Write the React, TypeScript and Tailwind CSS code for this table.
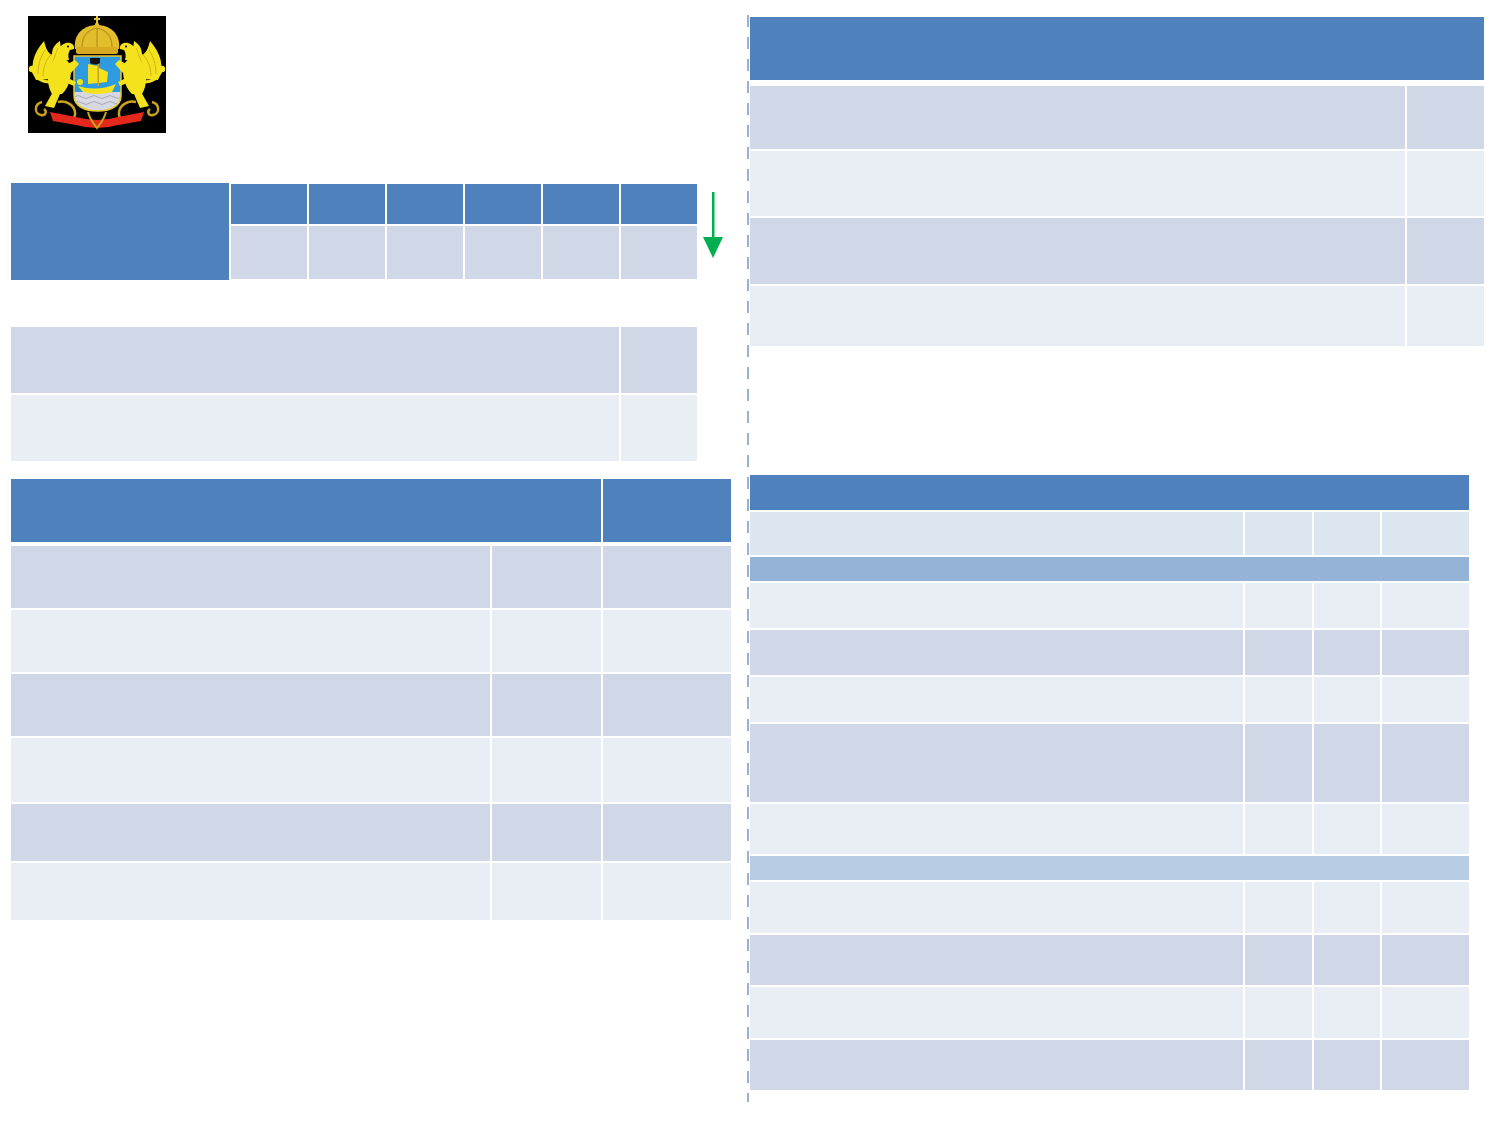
const HEAD = "bg-[#4f81bd]";
const DARK = "bg-[#d0d8e8]";
const LIGHT = "bg-[#e9edf4]";

function Griffin() {
  return (
    <g fill="#f4e21c">
      <path d="M8 64 C1 52 5 37 16 25 C18 33 20 37 24 39 C24 32 27 28 32 25 C34 37 31 52 24 63 Z" />
      <path d="M10 58 C10 48 13 40 17 34 M15 60 C15 50 19 42 24 38 M21 60 C23 50 26 42 30 32" stroke="#c9a21c" strokeWidth="0.8" fill="none" />
      <path d="M28 44 C27 36 31 29 38 27 C43 26 47 29 46 33 L42 34 C40 37 40 40 41 44 Z" />
      <circle cx="40" cy="30.5" r="1" fill="#000" />
      <path d="M27 42 C34 40 43 44 43 54 C43 64 40 72 34 78 L24 78 C19 70 19 58 22 50 Z" />
      <path d="M38 49 L47 44 L51 48 L43 57 Z" />
      <path d="M40 62 L48 66 L46 70 L39 67 Z" />
      <path d="M26 74 L17 90 L26 92 L32 78 Z" />
      <path d="M22 66 C14 66 8 62 5 55" stroke="#f4e21c" strokeWidth="3" fill="none" />
      <circle cx="4" cy="53" r="3.2" />
      <path d="M14 86 C6 88 6 98 13 99 C18 100 19 95 16 93" stroke="#c9a21c" strokeWidth="2.5" fill="none" />
      <path d="M30 86 C38 84 46 89 47 96 C48 103 41 106 37 102" stroke="#c9a21c" strokeWidth="2.5" fill="none" />
      <path d="M22 96 L48 101 L48 109 L25 105 Z" fill="#e4281c" />
    </g>
  );
}

function CoatOfArms() {
  return (
    <svg width="138" height="117" viewBox="0 0 138 117">
      <rect width="138" height="117" fill="#000" />
      <defs>
        <clipPath id="shield">
          <path d="M46 40 H93 V80 C93 90 82 95 69.5 95 C57 95 46 90 46 80 Z" />
        </clipPath>
      </defs>
      {/* crown */}
      <rect x="68" y="0" width="2" height="8" fill="#e8c830" />
      <rect x="66" y="2" width="6" height="2" fill="#e8c830" />
      <circle cx="69" cy="9" r="2.2" fill="#e8c830" />
      <path d="M47 33 C45 17 57 9 69 9 C81 9 93 17 91 33 Z" fill="#e2bd2c" />
      <path d="M54 31 C54 20 60 14 69 12 M84 31 C84 20 78 14 69 12 M69 12 V31" stroke="#b8901c" strokeWidth="1.2" fill="none" />
      <rect x="48" y="31" width="42" height="7" rx="2" fill="#d8aa22" />
      {/* shield */}
      <g clipPath="url(#shield)">
        <rect x="46" y="38" width="48" height="60" fill="#2e9be0" />
        <rect x="46" y="76" width="48" height="22" fill="#d6d8e2" />
        <path d="M46 81 Q50 78 54 81 T62 81 T70 81 T78 81 T86 81 T94 81 M46 87 Q50 84 54 87 T62 87 T70 87 T78 87 T86 87 T94 87" stroke="#a8acb8" strokeWidth="1" fill="none" />
        <path d="M60 48 L70 50 L70 67 L60 68 Z" fill="#f4e21c" />
        <path d="M71 52 L80 56 L79 66 L71 67 Z" fill="#f4e21c" />
        <rect x="69.5" y="44" width="1.5" height="26" fill="#c9a21c" />
        <path d="M50 70 Q69 76 88 68 L84 76 Q69 80 55 76 Z" fill="#f4e21c" />
        <circle cx="52" cy="66" r="3" fill="#f4e21c" />
        <path d="M62 42 H72 V47 Q67 50 62 47 Z" fill="#111" />
      </g>
      <path d="M46 40 H93 V80 C93 90 82 95 69.5 95 C57 95 46 90 46 80 Z" fill="none" stroke="#e8c830" strokeWidth="1.5" />
      <Griffin />
      <g transform="translate(138,0) scale(-1,1)">
        <Griffin />
      </g>
      <path d="M48 101 Q69 107 90 101 L90 109 Q69 115 48 109 Z" fill="#e4281c" />
      <path d="M60 96 C62 104 66 108 69 112 C72 108 76 104 78 96" stroke="#c9a21c" strokeWidth="2" fill="none" />
    </svg>
  );
}

function DownArrow() {
  return (
    <svg width="20" height="66" viewBox="0 0 20 66">
      <rect x="9" y="0" width="2.5" height="48" fill="#00b050" />
      <polygon points="0,45 20,45 10,66" fill="#00b050" />
    </svg>
  );
}

const t3Rows = [62, 62, 62, 64, 57, 57];
const t4Rows = [63, 65, 66, 60];

type Row = { h: number; kind: "dark" | "light" | "first" | "sec1" | "sec2" };
const t5Rows: Row[] = [
  { h: 43, kind: "first" },
  { h: 24, kind: "sec1" },
  { h: 45, kind: "light" },
  { h: 45, kind: "dark" },
  { h: 45, kind: "light" },
  { h: 78, kind: "dark" },
  { h: 50, kind: "light" },
  { h: 24, kind: "sec2" },
  { h: 51, kind: "light" },
  { h: 50, kind: "dark" },
  { h: 51, kind: "light" },
  { h: 50, kind: "dark" },
];

function rowBg(kind: Row["kind"]) {
  if (kind === "dark") return "bg-[#d0d8e8]";
  if (kind === "light") return "bg-[#e9edf4]";
  if (kind === "first") return "bg-[#dce6f1]";
  if (kind === "sec1") return "bg-[#95b3d7]";
  return "bg-[#b8cce4]";
}

export default function App() {
  return (
    <div className="w-[1500px] h-[1125px] bg-white flex font-['Liberation_Sans',sans-serif]">
      {/* Left column */}
      <div className="w-[747px] pl-[11px] pt-[16px] flex flex-col">
        <div className="ml-[17px]">
          <CoatOfArms />
        </div>

        {/* Table 1 */}
        <div className="mt-[50px] flex items-start">
          <div className="flex gap-[2px]">
            <div className={`w-[218px] h-[97px] ${HEAD}`} />
            <div className="mt-[1px] grid grid-cols-[repeat(6,76px)] grid-rows-[40px_53px] gap-[2px]">
              {Array.from({ length: 6 }).map((_, i) => (
                <div key={`h${i}`} className={HEAD} />
              ))}
              {Array.from({ length: 6 }).map((_, i) => (
                <div key={`d${i}`} className={DARK} />
              ))}
            </div>
          </div>
          <div className="ml-[6px] mt-[9px]">
            <DownArrow />
          </div>
        </div>

        {/* Table 2 */}
        <div className="mt-[47px] w-[686px] grid grid-cols-[608px_76px] grid-rows-[66px_66px] gap-[2px]">
          <div className={DARK} />
          <div className={DARK} />
          <div className={LIGHT} />
          <div className={LIGHT} />
        </div>

        {/* Table 3 */}
        <div className="mt-[18px] w-[720px] flex flex-col">
          <div className="flex gap-[2px]">
            <div className={`w-[590px] h-[63px] ${HEAD}`} />
            <div className={`w-[128px] h-[63px] ${HEAD}`} />
          </div>
          <div className="mt-[4px] flex flex-col gap-[2px]">
            {t3Rows.map((h, i) => (
              <div key={i} className="grid grid-cols-[479px_109px_128px] gap-[2px]" style={{ height: h }}>
                <div className={i % 2 === 0 ? DARK : LIGHT} />
                <div className={i % 2 === 0 ? DARK : LIGHT} />
                <div className={i % 2 === 0 ? DARK : LIGHT} />
              </div>
            ))}
          </div>
        </div>
      </div>

      {/* Divider */}
      <div className="mt-[15px] w-[2px] h-[1087px] bg-[repeating-linear-gradient(to_bottom,#9bb2cf_0px,#9bb2cf_12px,transparent_12px,transparent_22px)]" />

      {/* Right column */}
      <div className="pl-[1px] pt-[17px] flex flex-col">
        {/* Table 4 */}
        <div className="w-[734px] flex flex-col">
          <div className={`h-[63px] ${HEAD}`} />
          <div className="mt-[6px] flex flex-col gap-[2px]">
            {t4Rows.map((h, i) => (
              <div key={i} className="grid grid-cols-[655px_77px] gap-[2px]" style={{ height: h }}>
                <div className={i % 2 === 0 ? DARK : LIGHT} />
                <div className={i % 2 === 0 ? DARK : LIGHT} />
              </div>
            ))}
          </div>
        </div>

        {/* Table 5 */}
        <div className="mt-[129px] w-[719px] flex flex-col gap-[2px]">
          <div className={`h-[35px] ${HEAD}`} />
          {t5Rows.map((r, i) =>
            r.kind === "sec1" || r.kind === "sec2" ? (
              <div key={i} className={rowBg(r.kind)} style={{ height: r.h }} />
            ) : (
              <div key={i} className="grid grid-cols-[493px_67px_66px_87px] gap-[2px]" style={{ height: r.h }}>
                <div className={rowBg(r.kind)} />
                <div className={rowBg(r.kind)} />
                <div className={rowBg(r.kind)} />
                <div className={rowBg(r.kind)} />
              </div>
            )
          )}
        </div>
      </div>
    </div>
  );
}
